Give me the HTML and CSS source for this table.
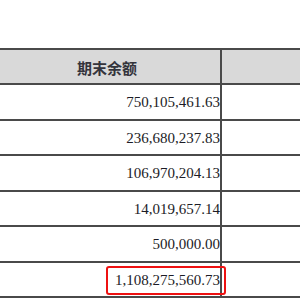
FILE: index.html
```html
<!DOCTYPE html>
<html lang="zh">
<head>
<meta charset="utf-8">
<link rel="stylesheet" href="styles.css">
</head>
<body>
<div class="sheet">
  <div class="row head h35">
    <div class="cell label">期末余额</div>
    <div class="cell rest"></div>
  </div>
  <div class="row h36">
    <div class="cell amount">750,105,461.63</div>
    <div class="cell rest"></div>
  </div>
  <div class="row h35">
    <div class="cell amount">236,680,237.83</div>
    <div class="cell rest"></div>
  </div>
  <div class="row h36">
    <div class="cell amount">106,970,204.13</div>
    <div class="cell rest"></div>
  </div>
  <div class="row h35">
    <div class="cell amount">14,019,657.14</div>
    <div class="cell rest"></div>
  </div>
  <div class="row h36">
    <div class="cell amount">500,000.00</div>
    <div class="cell rest"></div>
  </div>
  <div class="row h35 last">
    <div class="cell amount"><span class="marked">1,108,275,560.73</span></div>
    <div class="cell rest"></div>
  </div>
</div>
</body>
</html>
```

FILE: styles.css
```css
html, body {
  margin: 0;
  padding: 0;
  background: #ffffff;
}
.sheet {
  padding-top: 48px;
  width: 300px;
  overflow: hidden;
}
.row {
  display: grid;
  grid-template-columns: 222px 1fr;
  border-top: 2px solid #4a4a4a;
  box-sizing: border-box;
}
.h35 { height: 35px; }
.h36 { height: 36px; }
.row.last {
  height: 37px;
  border-bottom: 2px solid #4a4a4a;
}
.row.head {
  background: #d9d9d9;
}
.cell {
  display: flex;
  align-items: center;
  box-sizing: border-box;
}
.cell.label,
.cell.amount {
  border-right: 2px solid #4a4a4a;
}
.label {
  justify-content: center;
  padding-right: 6px;
  font-family: "Noto Sans CJK SC", sans-serif;
  font-weight: 700;
  font-size: 15px;
  color: #34343c;
  padding-top: 1px;
}
.amount {
  justify-content: flex-end;
  font-family: "Liberation Serif", serif;
  font-size: 15px;
  color: #1c1c26;
  padding-top: 1px;
}
.marked {
  position: relative;
}
.marked::after {
  content: "";
  position: absolute;
  left: -9px;
  right: -6px;
  top: -6px;
  bottom: -6px;
  border: 2px solid #ee1111;
  border-radius: 3px;
}
```
